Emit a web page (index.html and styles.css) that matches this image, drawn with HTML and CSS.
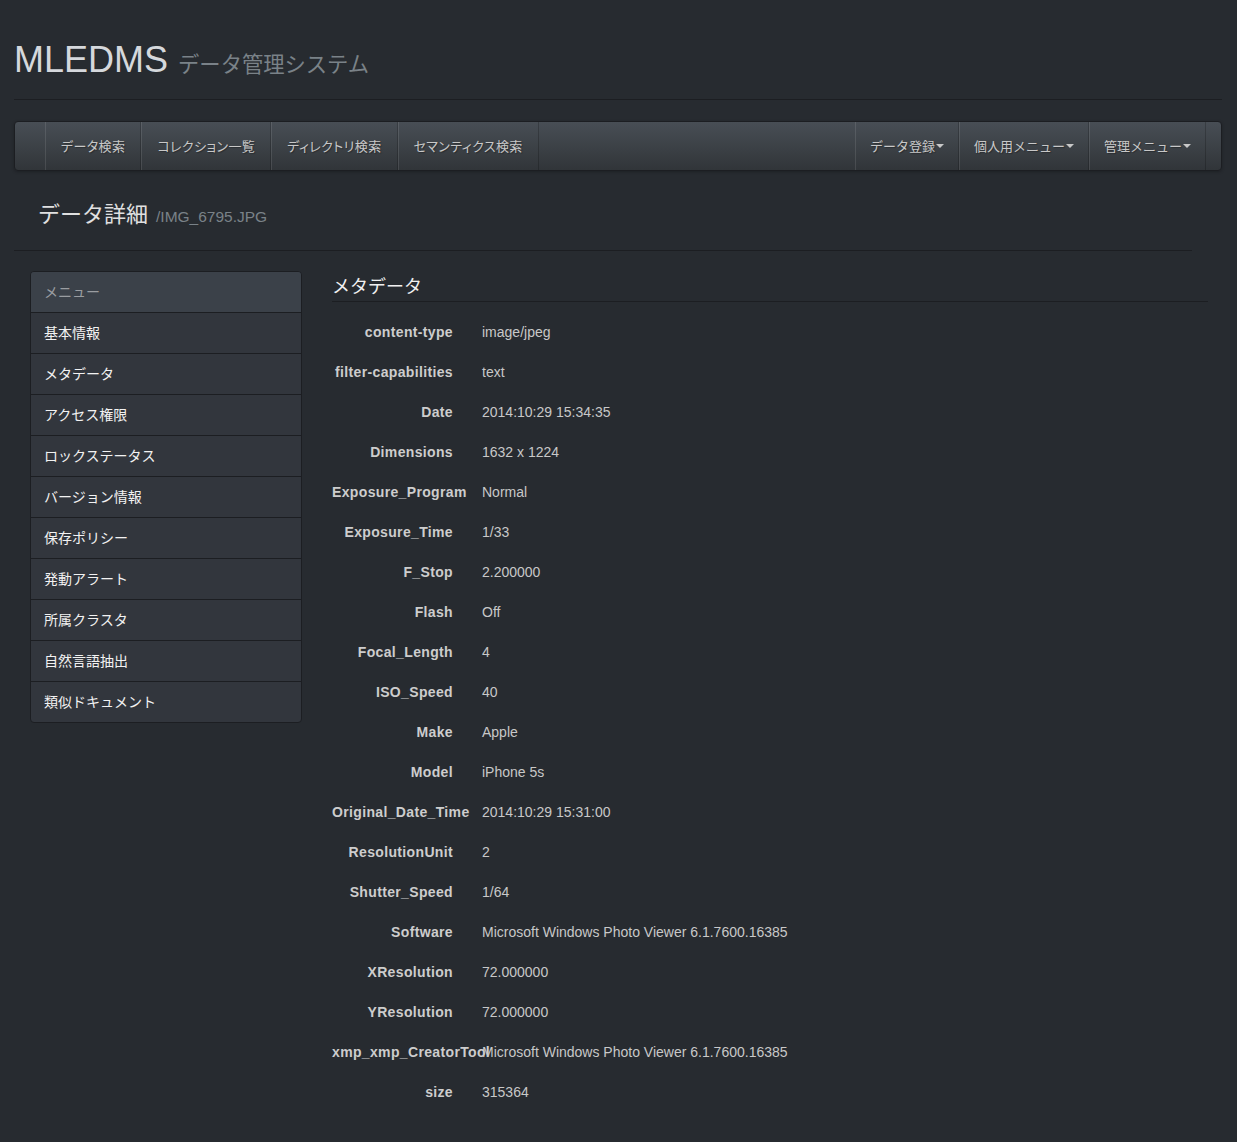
FILE: index.html
```html
<!DOCTYPE html>
<html lang="ja">
<head>
<meta charset="utf-8">
<title>MLEDMS データ管理システム</title>
<link rel="stylesheet" href="styles.css">
</head>
<body>
<div class="page">
  <header class="site-header">
    <h1 class="brand">MLEDMS <small>データ管理システム</small></h1>
  </header>

  <nav class="navbar">
    <ul class="nav nav-left">
      <li><a href="#">データ検索</a></li>
      <li><a href="#">コレクション一覧</a></li>
      <li><a href="#">ディレクトリ検索</a></li>
      <li><a href="#">セマンティクス検索</a></li>
    </ul>
    <ul class="nav nav-right">
      <li><a href="#">データ登録<span class="caret"></span></a></li>
      <li><a href="#">個人用メニュー<span class="caret"></span></a></li>
      <li><a href="#">管理メニュー<span class="caret"></span></a></li>
    </ul>
  </nav>

  <div class="page-title">
    <h2>データ詳細 <small>/IMG_6795.JPG</small></h2>
  </div>

  <div class="main">
    <aside class="sidebar">
      <div class="side-head">メニュー</div>
      <a class="side-item" href="#">基本情報</a>
      <a class="side-item" href="#">メタデータ</a>
      <a class="side-item" href="#">アクセス権限</a>
      <a class="side-item" href="#">ロックステータス</a>
      <a class="side-item" href="#">バージョン情報</a>
      <a class="side-item" href="#">保存ポリシー</a>
      <a class="side-item" href="#">発動アラート</a>
      <a class="side-item" href="#">所属クラスタ</a>
      <a class="side-item" href="#">自然言語抽出</a>
      <a class="side-item" href="#">類似ドキュメント</a>
    </aside>

    <section class="content">
      <h3 class="section-title">メタデータ</h3>
      <dl class="meta">
        <div class="row"><dt>content-type</dt><dd>image/jpeg</dd></div>
        <div class="row"><dt>filter-capabilities</dt><dd>text</dd></div>
        <div class="row"><dt>Date</dt><dd>2014:10:29 15:34:35</dd></div>
        <div class="row"><dt>Dimensions</dt><dd>1632 x 1224</dd></div>
        <div class="row"><dt>Exposure_Program</dt><dd>Normal</dd></div>
        <div class="row"><dt>Exposure_Time</dt><dd>1/33</dd></div>
        <div class="row"><dt>F_Stop</dt><dd>2.200000</dd></div>
        <div class="row"><dt>Flash</dt><dd>Off</dd></div>
        <div class="row"><dt>Focal_Length</dt><dd>4</dd></div>
        <div class="row"><dt>ISO_Speed</dt><dd>40</dd></div>
        <div class="row"><dt>Make</dt><dd>Apple</dd></div>
        <div class="row"><dt>Model</dt><dd>iPhone 5s</dd></div>
        <div class="row"><dt>Original_Date_Time</dt><dd>2014:10:29 15:31:00</dd></div>
        <div class="row"><dt>ResolutionUnit</dt><dd>2</dd></div>
        <div class="row"><dt>Shutter_Speed</dt><dd>1/64</dd></div>
        <div class="row"><dt>Software</dt><dd>Microsoft Windows Photo Viewer 6.1.7600.16385</dd></div>
        <div class="row"><dt>XResolution</dt><dd>72.000000</dd></div>
        <div class="row"><dt>YResolution</dt><dd>72.000000</dd></div>
        <div class="row"><dt>xmp_xmp_CreatorTool</dt><dd>Microsoft Windows Photo Viewer 6.1.7600.16385</dd></div>
        <div class="row"><dt>size</dt><dd>315364</dd></div>
      </dl>
    </section>
  </div>
</div>
</body>
</html>
```

FILE: styles.css
```css
html, body {
  margin: 0;
  padding: 0;
  background: #272b30;
}

body {
  font-family: "Liberation Sans", "Noto Sans CJK JP", sans-serif;
  font-size: 14px;
  color: #c8c8c8;
}

.page {
  padding: 0 15px 40px 14px;
}

/* header */
.site-header {
  padding-top: 40px;
  padding-bottom: 19px;
  border-bottom: 1px solid #1c1e22;
}

.brand {
  margin: 0;
  height: 40px;
  display: flex;
  align-items: baseline;
  font-size: 36px;
  line-height: 40px;
  font-weight: normal;
  color: #d5d8dc;
  white-space: nowrap;
}

.brand small {
  margin-left: 10px;
  font-size: 21.3px;
  color: #7a8288;
  font-weight: normal;
}

/* navbar */
.navbar {
  margin-top: 21px;
  height: 48px;
  display: flex;
  justify-content: space-between;
  border: 1px solid #1c1e22;
  border-radius: 4px;
  background: linear-gradient(to bottom, #484e55 0%, #3a3f44 60%, #313539 100%);
  box-shadow: 0 1px 3px rgba(0, 0, 0, 0.25);
}

.nav {
  list-style: none;
  margin: 0;
  padding: 0;
  display: flex;
}

.nav-left {
  padding-left: 30px;
}

.nav-right {
  padding-right: 15px;
}

.nav li {
  display: flex;
}

.nav a {
  display: flex;
  align-items: center;
  padding: 0 15px 2px;
  font-size: 13px;
  color: #c8c8c8;
  text-decoration: none;
  text-shadow: 1px 1px 1px rgba(0, 0, 0, 0.3);
  border-left: 1px solid rgba(255, 255, 255, 0.1);
  border-right: 1px solid rgba(0, 0, 0, 0.2);
  white-space: nowrap;
}

.nav-left a {
  font-feature-settings: "palt";
  letter-spacing: 0.4px;
}

.nav-right a {
  padding-left: 14px;
  padding-right: 14px;
}

.caret {
  display: inline-block;
  width: 0;
  height: 0;
  margin-left: 1px;
  margin-top: 2px;
  border-top: 4px solid #c8c8c8;
  border-left: 4px solid transparent;
  border-right: 4px solid transparent;
}

/* page title */
.page-title {
  margin-top: 29px;
  margin-right: 30px;
  padding-left: 24px;
  padding-bottom: 20px;
  border-bottom: 1px solid #1c1e22;
}

.page-title h2 {
  margin: 0;
  height: 30px;
  display: flex;
  align-items: baseline;
  font-size: 22px;
  line-height: 30px;
  font-weight: normal;
  color: #e0e0e0;
  white-space: nowrap;
}

.page-title small {
  margin-left: 8px;
  font-size: 15.5px;
  color: #7a8288;
}

/* main */
.main {
  margin-top: 20px;
  display: flex;
  align-items: flex-start;
}

.sidebar {
  margin-left: 16px;
  width: 270px;
  flex: none;
  display: flex;
  flex-direction: column;
  border: 1px solid #1c1e22;
  border-radius: 4px;
  overflow: hidden;
  background: #32363d;
}

.side-head,
.side-item {
  height: 38px;
  display: flex;
  align-items: center;
  padding: 0 13px 2px;
  font-size: 14px;
}

.side-head {
  background: #3b4149;
  color: #9a9da1;
}

.side-item {
  border-top: 1px solid #1c1e22;
  color: #f2f2f2;
  text-decoration: none;
}

.content {
  flex: 1;
  margin-left: 30px;
  margin-right: 14px;
}

.section-title {
  margin: 0;
  height: 28px;
  display: flex;
  align-items: center;
  padding-bottom: 2px;
  font-size: 18px;
  font-weight: normal;
  color: #f0f0f0;
  border-bottom: 1px solid #1c1e22;
}

.meta {
  margin: 10px 0 0;
}

.meta .row {
  height: 40px;
  display: flex;
  align-items: center;
}

.meta dt {
  width: 121px;
  flex: none;
  text-align: right;
  white-space: nowrap;
  font-weight: bold;
  letter-spacing: 0.35px;
  color: #cdcdcd;
}

.meta dd {
  margin: 0 0 0 29px;
  white-space: nowrap;
  color: #c8c8c8;
}
```
